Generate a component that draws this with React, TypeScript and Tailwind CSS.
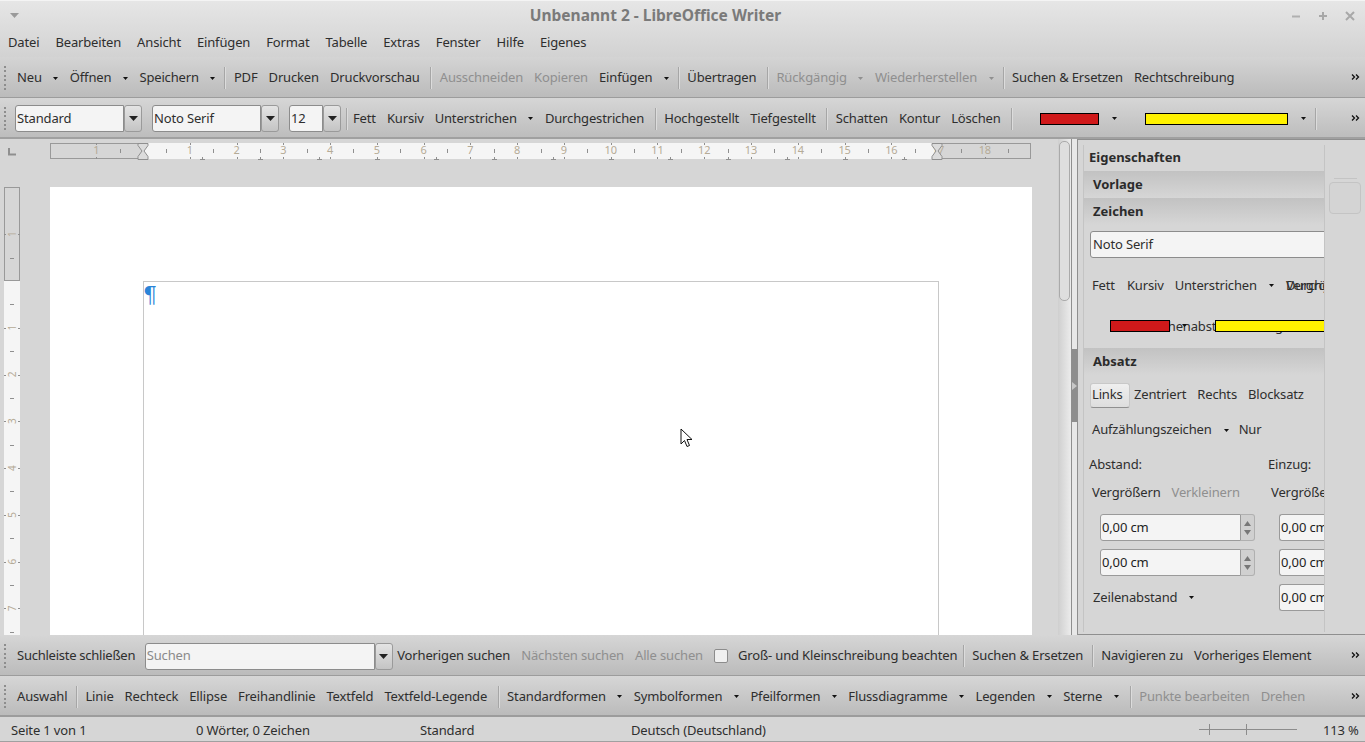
import React from 'react';

type Tool = { t?: string; caret?: boolean; off?: boolean; sep?: boolean; near?: boolean };

const Caret = ({ off }: { off?: boolean }) => (
  <span className="flex w-[17px] shrink-0 items-center justify-center">
    <svg width="5" height="3" viewBox="0 0 5 3"><path d="M0 0h5L2.500 3z" fill={off ? '#8f8f8f' : '#111'} /></svg>
  </span>
);

const Grip = () => (
  <div className="ml-[4px] mr-[5.5px] flex h-[24px] w-[2px] shrink-0 flex-col justify-between">
    {[0, 1, 2, 3, 4, 5].map(i => <span key={i} className="h-[2px] w-[2px] bg-[#8d8d8d]" />)}
  </div>
);

const Sep = ({ near = false }: { near?: boolean }) => (
  <span className={`mr-[3px] h-[22px] w-px shrink-0 bg-[#a6a6a6] shadow-[1px_0_0_#dcdcdc] ${near ? 'ml-[3px]' : 'ml-[5px]'}`} />
);

const More = () => (
  <svg className="absolute right-[5px] top-1/2 -translate-y-1/2" width="9" height="7" viewBox="0 0 9 7">
    <path d="M1 1l2.500 2.500L1 6M5 1l2.500 2.500L5 6" fill="none" stroke="#111" strokeWidth="1.3" />
  </svg>
);

const Combo = ({ w, text, btn = 18, hint }: { w: number; text: string; btn?: number; hint?: boolean }) => (
  <div className="flex h-[27px] shrink-0" style={{ width: w }}>
    <div className={`flex flex-1 items-center rounded-l-[3px] border border-[#8c8c8c] bg-[#f4f4f4] pl-[1px] ${hint ? 'text-[#8a8a8a]' : ''}`}>{text}</div>
    <div className="flex items-center justify-center rounded-[3px] border border-[#9a9a9a] bg-gradient-to-b from-[#e4e4e4] to-[#c4c4c4]" style={{ width: btn }}>
      <svg width="9" height="5" viewBox="0 0 9 5"><path d="M0 0h9L4.500 5z" fill="#222" /></svg>
    </div>
  </div>
);

const Items = ({ items }: { items: Tool[] }) => (
  <>
    {items.map((it, i) => {
      if (it.sep) return <Sep key={i} near={it.near} />;
      return (
        <React.Fragment key={i}>
          <span className={`shrink-0 whitespace-nowrap px-[5.5px] ${it.off ? 'text-[#8f8f8f]' : ''}`}>{it.t}</span>
          {it.caret && <Caret off={it.off} />}
        </React.Fragment>
      );
    })}
  </>
);

const bar1: Tool[] = [
  { t: 'Neu', caret: true }, { t: 'Öffnen', caret: true }, { t: 'Speichern', caret: true }, { sep: true, near: true },
  { t: 'PDF' }, { t: 'Drucken' }, { t: 'Druckvorschau' }, { sep: true },
  { t: 'Ausschneiden', off: true }, { t: 'Kopieren', off: true }, { t: 'Einfügen', caret: true }, { sep: true, near: true },
  { t: 'Übertragen' }, { sep: true },
  { t: 'Rückgängig', off: true, caret: true }, { t: 'Wiederherstellen', off: true, caret: true }, { sep: true, near: true },
  { t: 'Suchen & Ersetzen' }, { t: 'Rechtschreibung' },
];
const bar2: Tool[] = [
  { t: 'Fett' }, { t: 'Kursiv' }, { t: 'Unterstrichen', caret: true }, { t: 'Durchgestrichen' }, { sep: true },
  { t: 'Hochgestellt' }, { t: 'Tiefgestellt' }, { sep: true },
  { t: 'Schatten' }, { t: 'Kontur' }, { t: 'Löschen' }, { sep: true },
];
const bar4: Tool[] = [
  { t: 'Auswahl' }, { sep: true, near: true }, { t: 'Linie' }, { t: 'Rechteck' }, { t: 'Ellipse' }, { t: 'Freihandlinie' }, { t: 'Textfeld' }, { t: 'Textfeld-Legende' }, { sep: true },
  { t: 'Standardformen', caret: true }, { t: 'Symbolformen', caret: true }, { t: 'Pfeilformen', caret: true }, { t: 'Flussdiagramme', caret: true }, { t: 'Legenden', caret: true }, { t: 'Sterne', caret: true }, { sep: true },
  { t: 'Punkte bearbeiten', off: true }, { t: 'Drehen', off: true },
];

const cm = 46.77;

const HRuler = () => (
  <svg width="982" height="18" viewBox="0 0 982 18" className="block">
    <rect x="0.5" y="0.5" width="93" height="15" fill="#d6d6d6" stroke="#999" />
    <rect x="94" y="0" width="794" height="16" fill="#f5f5f5" />
    <rect x="887.5" y="0.5" width="93" height="15" fill="#d6d6d6" stroke="#999" />
    {Array.from({ length: 40 }, (_, i) => {
      const x = 93 + (i - 2) * cm / 2;
      if (x < 2 || x > 978 || i === 2) return null;
      return i % 2
        ? <path key={i} d={`M${Math.round(x) + 0.5} 6v4`} stroke="#8f8f8f" />
        : <path key={i} d={`M${Math.round(x) + 0.5} 0v2M${Math.round(x) + 0.5} 14v2`} stroke="#8f8f8f" />;
    })}
    {Array.from({ length: 15 }, (_, i) => {
      const x = Math.round(93 + (i + 1) * 58.5) + 0.5;
      return x < 887 ? <path key={i} d={`M${x} 14v3M${x - 2.5} 16.500h5`} stroke="#8f8f8f" fill="none" /> : null;
    })}
    {[-1, 1, 2, 3, 4, 5, 6, 7, 8, 9, 10, 11, 12, 13, 14, 15, 16, 17, 18].map(n => (
      <text key={n} x={93 + n * cm} y="11" textAnchor="middle" fontSize="11" fill="#b5ab97" fontFamily="Noto Sans, sans-serif">{Math.abs(n)}</text>
    ))}
    {[93, 887].map(x => (
      <path key={x} d={`M${x - 5} 0.5h10v2L${x + 1} 8l4 5.500v3H${x - 5}v-3L${x - 1} 8l-4-5.500z`} fill="#dcdcdc" stroke="#8f8f8f" />
    ))}
  </svg>
);

const VRuler = () => (
  <svg width="16" height="448" viewBox="0 0 16 448" className="block shrink-0">
    <rect x="0" y="93" width="16" height="355" fill="#f5f5f5" />
    <rect x="0.5" y="0.5" width="15" height="93" fill="#d6d6d6" stroke="#999" />
    {Array.from({ length: 20 }, (_, i) => {
      const y = Math.round(94 + (i - 2) * cm / 2) + 0.5;
      if (y < 2 || i === 2) return null;
      return i % 2
        ? <path key={i} d={`M6 ${y}h4`} stroke="#8f8f8f" />
        : <path key={i} d={`M0 ${y}h2M14 ${y}h2`} stroke="#8f8f8f" />;
    })}
    {[-1, 1, 2, 3, 4, 5, 6, 7].map(n => {
      const y = 94 + n * cm;
      return <text key={n} x="8" y={y} transform={`rotate(-90 8 ${y})`} dy="4" textAnchor="middle" fontSize="10" fill="#b5ab97" fontFamily="Noto Sans, sans-serif">{Math.abs(n)}</text>;
    })}
  </svg>
);

const Spin = ({ w, arrows = true }: { w: number; arrows?: boolean }) => (
  <div className="flex h-[27px] shrink-0" style={{ width: w }}>
    <div className={`flex flex-1 items-center border border-[#9a9a9a] bg-[#f4f4f4] pl-[1px] text-[#1e1e1e] rounded-l-[3px] ${arrows ? '' : 'border-r-0'}`}>0,00 cm</div>
    {arrows && (
      <div className="flex w-[14px] flex-col items-center justify-center gap-[4px] rounded-r-[3px] border border-l-0 border-[#b0b0b0] bg-[#d0d0d0]">
        <svg width="7" height="5" viewBox="0 0 7 5"><path d="M0 5h7L3.500 0z" fill="#777" /></svg>
        <svg width="7" height="5" viewBox="0 0 7 5"><path d="M0 0h7L3.500 5z" fill="#777" /></svg>
      </div>
    )}
  </div>
);

const Deck = ({ title }: { title: string }) => (
  <div className="flex h-[27px] shrink-0 items-center bg-gradient-to-b from-[#c2c2c2] to-[#d6d6d6] pl-[9px] font-bold tracking-normal text-[#2b2b2b]">{title}</div>
);

const SmallCaret = () => (
  <svg width="5" height="3" viewBox="0 0 5 3"><path d="M0 0h5L2.500 3z" fill="#111" /></svg>
);

const Sidebar = () => (
  <div className="relative flex h-full w-[242px] shrink-0 flex-col overflow-hidden border-x border-[#c4c4c4] bg-[#d6d6d6]">
    <div className="flex h-[26px] shrink-0 items-center pl-[5px] font-bold tracking-normal text-[#2b2b2b]">Eigenschaften</div>
    <Deck title="Vorlage" />
    <Deck title="Zeichen" />
    <div className="relative h-[123px] shrink-0">
      <div className="absolute left-[6px] top-[6px] flex h-[27px] w-[260px] items-center rounded-l-[3px] border border-[#8c8c8c] bg-[#f4f4f4] pl-[2px]">Noto Serif</div>
      <div className="absolute left-[8px] top-[51px] flex w-[400px] items-center">
        <span className="mr-[12px]">Fett</span>
        <span className="mr-[11px]">Kursiv</span>
        <span>Unterstrichen</span>
        <span className="ml-[12px] flex"><SmallCaret /></span>
      </div>
      <span className="absolute left-[202px] top-[51px] whitespace-nowrap">Vergrößern</span>
      <span className="absolute left-[202px] top-[51px] whitespace-nowrap">Durchgestrichen</span>
      <span className="absolute left-[60px] top-[92px] whitespace-nowrap">Zeichenabstand festlegen</span>
      <span className="absolute left-[98px] top-[99px] flex"><SmallCaret /></span>
      <span className="absolute left-[26px] top-[95px] h-[12px] w-[60px] border border-black bg-[#d0191a]" />
      <span className="absolute left-[131px] top-[95px] h-[12px] w-[143px] border border-black bg-[#fff200]" />
    </div>
    <Deck title="Absatz" />
    <div className="relative flex-1">
      <div className="ml-[6px] mt-[8px] flex h-[24px] items-center">
        <span className="flex h-[25px] w-[40px] items-center rounded-[3px] border border-[#c8c8c8] border-b-[#909090] bg-gradient-to-b from-[#efefef] to-[#dedede] pl-[1px]">Links</span>
        <span className="ml-[4px]">Zentriert</span>
        <span className="ml-[11px]">Rechts</span>
        <span className="ml-[11px]">Blocksatz</span>
      </div>
      <div className="ml-[8px] mt-[11px] flex h-[24px] items-center">
        <span>Aufzählungszeichen</span>
        <span className="ml-[12px] mr-[10px] flex"><SmallCaret /></span>
        <span>Nur</span>
      </div>
      <div className="mt-[11px] grid grid-cols-[179px_1fr] pl-[5px]">
        <div className="flex h-[24px] items-center">Abstand:</div>
        <div className="flex h-[24px] items-center">Einzug:</div>
        <div className="mt-[4px] flex h-[24px] items-center pl-[3px]">
          <span>Vergrößern</span>
          <span className="ml-[11px] text-[#8f8f8f]">Verkleinern</span>
        </div>
        <div className="mt-[4px] flex h-[24px] items-center pl-[3px]"><span className="whitespace-nowrap">Vergrößern</span></div>
        <div className="mt-[9px] pl-[11px]"><Spin w={155} /></div>
        <div className="mt-[9px] pl-[11px]"><Spin w={80} arrows={false} /></div>
        <div className="mt-[8px] pl-[11px]"><Spin w={155} /></div>
        <div className="mt-[8px] pl-[11px]"><Spin w={80} arrows={false} /></div>
        <div className="mt-[8px] flex h-[27px] items-center pl-[4px]">
          <span>Zeilenabstand</span>
          <span className="ml-[12px] flex"><SmallCaret /></span>
        </div>
        <div className="mt-[8px] pl-[11px]"><Spin w={80} arrows={false} /></div>
      </div>
    </div>
  </div>
);

export default function App() {
  return (
    <div className="relative flex h-[742px] w-[1365px] flex-col overflow-hidden bg-[#d6d6d6] font-['Noto_Sans',sans-serif] text-[13px] tracking-[-0.15px] text-[#2e2e2e]">
      {/* title and menu share one gradient */}
      <div className="h-[57px] shrink-0 border-t border-[#f4f4f4] bg-gradient-to-b from-[#e6e6e6] to-[#d2d2d2]">
        <div className="relative flex h-[29px] items-center justify-center">
          <svg className="absolute left-[10px] top-[12px]" width="9" height="5" viewBox="0 0 9 5"><path d="M0 0h9L4.500 5z" fill="#9a9a9a" /></svg>
          <span className="ml-[-54px] text-[15.5px] font-bold tracking-normal text-[#7a7a7a]">Unbenannt 2 - LibreOffice Writer</span>
          <div className="absolute right-[10px] top-[10px] flex items-center gap-[17px]">
            <svg width="10" height="10" viewBox="0 0 10 10"><path d="M1 5.500h8" stroke="#b0b0b0" strokeWidth="2" /></svg>
            <svg width="10" height="10" viewBox="0 0 10 10"><path d="M1 5h8M5 1v8" stroke="#a8a8a8" strokeWidth="2" /></svg>
            <svg width="10" height="10" viewBox="0 0 10 10"><path d="M1 1l8 8M9 1l-8 8" stroke="#a8a8a8" strokeWidth="2" /></svg>
          </div>
        </div>
        <div className="flex h-[25px] items-center gap-[16px] pl-[8px]">
          {['Datei', 'Bearbeiten', 'Ansicht', 'Einfügen', 'Format', 'Tabelle', 'Extras', 'Fenster', 'Hilfe', 'Eigenes'].map(m => <span key={m}>{m}</span>)}
        </div>
      </div>

      <div className="relative flex h-[41px] shrink-0 items-center border-b border-[#9c9c9c] bg-gradient-to-b from-[#d4d4d4] to-[#bbbbbb] pt-[2px]">
        <Grip />
        <Items items={bar1} />
        <More />
      </div>

      <div className="relative flex h-[41px] shrink-0 items-center border-b-2 border-[#a0a0a0] bg-gradient-to-b from-[#d6d6d6] to-[#bdbdbd] pt-[2px]">
        <Grip />
        <div className="ml-[3.5px]"><Combo w={127} text="Standard" /></div>
        <div className="ml-[10px]"><Combo w={127} text="Noto Serif" /></div>
        <div className="ml-[10px]"><Combo w={52} text="12" /></div>
        <div className="ml-[2px] mr-[-2.5px] flex items-center"><Sep near /></div>
        <Items items={bar2} />
        <span className="ml-[25px] h-[12px] w-[59px] shrink-0 border border-black bg-[#d0191a]" />
        <span className="ml-[7px]"><Caret /></span>
        <span className="ml-[22px] h-[12px] w-[143px] shrink-0 border border-black bg-[#fff200]" />
        <span className="ml-[7px]"><Caret /></span>
        <Sep near />
        <More />
      </div>

      <div className="flex min-h-0 flex-1">
        <div className="relative flex w-[1058px] shrink-0 flex-col">
          <div className="flex h-[48px] shrink-0 pt-[4px]">
            <svg className="ml-[8px] mt-[5px]" width="8" height="8" viewBox="0 0 8 8"><path d="M1 0v6.500h7" fill="none" stroke="#8f8f8f" strokeWidth="2" /></svg>
            <div className="ml-[34px]"><HRuler /></div>
          </div>
          <div className="flex min-h-0 flex-1 pl-[4px]">
            <VRuler />
            <div className="ml-[30px] h-full w-[982px] overflow-hidden bg-white pl-[93px] pt-[94px]">
              <div className="h-[400px] w-[796px] border border-[#c8c8c8] font-['DejaVu_Serif',serif] text-[22px] leading-[26px] text-[#2a84d8]">
                <span className="ml-[-1px]">¶</span>
              </div>
            </div>
          </div>
          <svg className="absolute left-[680px] top-[289px]" width="13" height="20" viewBox="0 0 13 20">
            <path d="M1 1v15l3.500-3.500 2.500 6 2.500-1-2.500-6h5z" fill="#fff" stroke="#111" strokeWidth="1" />
          </svg>
        </div>

        <div className="w-[13px] shrink-0 bg-gradient-to-r from-[#cfcfcf] to-[#ececec] px-px pt-[2px]">
          <div className="h-[160px] rounded-[5px] border border-[#aaa] bg-[#dedede]" />
        </div>

        <div className="flex w-[7px] shrink-0 flex-col border-x border-[#8f8f8f] bg-[#e8e8e8]">
          <div className="mt-[210px] flex h-[73px] items-start bg-[#8e8e8e] pt-[33px]">
            <svg width="5" height="8" viewBox="0 0 5 8"><path d="M0 0l5 4-5 4z" fill="#c8c8c8" /></svg>
          </div>
        </div>

        <div className="flex min-w-0 flex-1 border-y border-[#8f8f8f] pt-[5px]">
          <div className="ml-[5px] h-[487px]"><Sidebar /></div>
          <div className="flex flex-1 flex-col items-center pt-[33px]">
            <span className="h-px w-[23px] bg-[#c4c4c4]" />
            <span className="mt-[3px] h-[32px] w-[32px] rounded-[4px] border border-[#c4c4c4] bg-[#d4d4d4]" />
          </div>
        </div>
      </div>

      <div className="relative flex h-[41px] shrink-0 items-center border-b border-[#9c9c9c] bg-gradient-to-b from-[#d6d6d6] to-[#bbbbbb] pt-[2px]">
        <Grip />
        <span className="shrink-0 whitespace-nowrap px-[5.5px] tracking-[-0.25px]">Suchleiste schließen</span>
        <div className="ml-[4px] mr-[-1px]"><Combo w={248} text="Suchen" hint /></div>
        <Items items={[{ t: 'Vorherigen suchen' }, { t: 'Nächsten suchen', off: true }, { t: 'Alle suchen', off: true }]} />
        <span className="ml-[6px] mr-[4px] h-[14px] w-[14px] shrink-0 rounded-[2px] border border-[#8c8c8c] bg-[#f0f0f0]" />
        <Items items={[{ t: 'Groß- und Kleinschreibung beachten' }]} />
        <span className="ml-[-3px]" />
        <Items items={[{ sep: true, near: true }, { t: 'Suchen & Ersetzen' }, { sep: true, near: true }, { t: 'Navigieren zu' }, { t: 'Vorheriges Element' }]} />
        <More />
      </div>

      <div className="relative flex h-[41px] shrink-0 items-center border-b-2 border-[#9c9c9c] bg-gradient-to-b from-[#d6d6d6] to-[#bbbbbb] pt-[2px]">
        <Grip />
        <Items items={bar4} />
        <span className="ml-[0.5px]"><Sep near /></span>
        <More />
      </div>

      <div className="relative h-[25px] shrink-0 border-b border-[#a0a0a0] bg-[#d6d6d6] pt-[3px]">
        <div className="grid h-full grid-cols-[185px_224px_211px_560px_1fr] items-center pl-[11px]">
          <span>Seite 1 von 1</span>
          <span>0 Wörter, 0 Zeichen</span>
          <span>Standard</span>
          <span>Deutsch (Deutschland)</span>
          <span className="ml-[132px] whitespace-nowrap">113 %</span>
        </div>
        <svg className="absolute left-[1199px] top-[7px]" width="99" height="11" viewBox="0 0 99 11">
          <path d="M0 5.500h98M10.500 0v11M47.500 0v11" stroke="#8c8c8c" strokeWidth="1" />
        </svg>
      </div>
    </div>
  );
}
